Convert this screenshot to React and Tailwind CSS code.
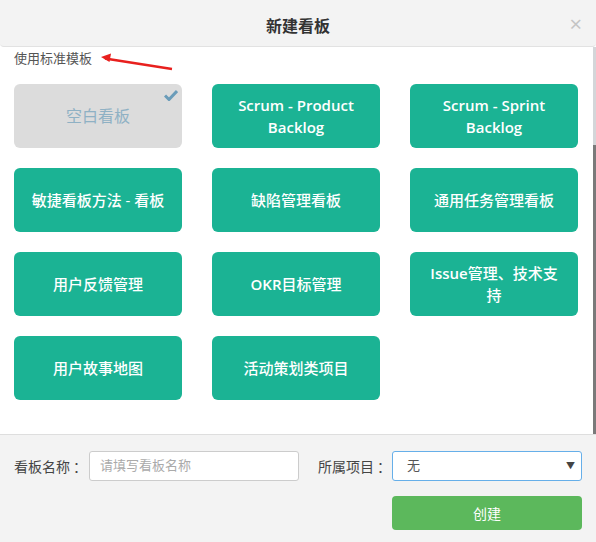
import React from "react";

const cards = [
  "Scrum - Product Backlog",
  "Scrum - Sprint Backlog",
  "敏捷看板方法 - 看板",
  "缺陷管理看板",
  "通用任务管理看板",
  "用户反馈管理",
  "OKR目标管理",
  "Issue管理、技术支持",
  "用户故事地图",
  "活动策划类项目",
];

const font = { fontFamily: '"Open Sans", "Noto Sans CJK SC", sans-serif' };

function CardText({ text }) {
  const parts = text.split(/([A-Za-z][A-Za-z \-]*[A-Za-z]|[A-Za-z])/).filter(Boolean);
  return (
    <span>
      {parts.map((p, i) =>
        /[A-Za-z]/.test(p) ? (
          <span key={i} className="font-semibold">{p}</span>
        ) : (
          <span key={i} className="font-medium">{p}</span>
        )
      )}
    </span>
  );
}

export default function App() {
  return (
    <div className="w-[596px] h-[542px] bg-white flex flex-col overflow-hidden text-[#333]" style={font}>
      <div className="h-[47px] shrink-0 bg-[#f3f3f3] border-b border-[#e2e2e2] rounded-b-[4px] flex items-center justify-center relative pt-[6px]">
        <span className="text-[16px] font-bold text-[#333]">新建看板</span>
        <span className="absolute right-[14px] top-[12px] text-[22px] text-[#c4c4c4] leading-none">×</span>
      </div>
      <div className="flex-1 flex min-h-0">
        <div className="flex-1 relative">
          <div className="pl-[14px] pt-[1px] text-[13px] text-[#555] leading-[20px]">使用标准模板</div>
          <svg className="absolute left-[96px] top-[4px]" width="80" height="22" viewBox="0 0 80 22">
            <line x1="76" y1="18" x2="9" y2="7.5" stroke="#e8201e" strokeWidth="2.4" />
            <polygon points="5,6 15,2.5 13.5,11" fill="#e8201e" />
          </svg>
          <div className="grid grid-cols-[168px_168px_168px] gap-x-[30px] gap-y-[20px] pl-[14px] pt-[16px]">
            <div className="h-[64px] rounded-[6px] bg-[#dcdcdc] flex items-center justify-center relative">
              <span className="text-[16px] text-[#8fb1c4]">空白看板</span>
              <svg className="absolute right-[4px] top-[5px]" width="14" height="12" viewBox="0 0 14 12">
                <path d="M1 6.5 L5 10.5 L13 2" stroke="#6a9cb9" strokeWidth="3" fill="none" />
              </svg>
            </div>
            {cards.map((c) => (
              <div
                key={c}
                className="h-[64px] rounded-[6px] bg-[#1bb394] flex items-center justify-center text-center px-[14px] text-white text-[15px] leading-[22px]"
              >
                <CardText text={c} />
              </div>
            ))}
          </div>
        </div>
        <div className="w-[3px] flex flex-col bg-[#d4d6d9]">
          <div className="h-[98px]" />
          <div className="flex-1 bg-[#7a7a7a]" />
        </div>
      </div>
      <div className="h-[108px] shrink-0 bg-[#f3f3f3] border-t border-[#dedede] px-[14px] pt-[16px]">
        <div className="flex items-center h-[30px]">
          <span className="text-[14px] text-[#444] w-[75px] whitespace-nowrap">
            看板名称<span className="ml-[3px]">：</span>
          </span>
          <div className="w-[210px] h-[30px] bg-white border border-[#ccc] rounded-[3px] flex items-center pl-[10px] text-[13px] text-[#aaa]">
            请填写看板名称
          </div>
          <span className="text-[14px] text-[#444] ml-[19px] w-[74px] whitespace-nowrap">
            所属项目<span className="ml-[3px]">：</span>
          </span>
          <div className="w-[190px] h-[30px] bg-white border border-[#66afe9] rounded-[3px] flex items-center pl-[14px] pr-[6px] text-[13px] text-[#555] justify-between">
            <span>无</span>
            <span className="text-[9px] text-[#444]">▼</span>
          </div>
        </div>
        <div className="flex justify-end mt-[15px]">
          <div className="w-[190px] h-[34px] bg-[#5cb85c] rounded-[4px] flex items-center justify-center text-white text-[14px]">
            创建
          </div>
        </div>
      </div>
    </div>
  );
}
